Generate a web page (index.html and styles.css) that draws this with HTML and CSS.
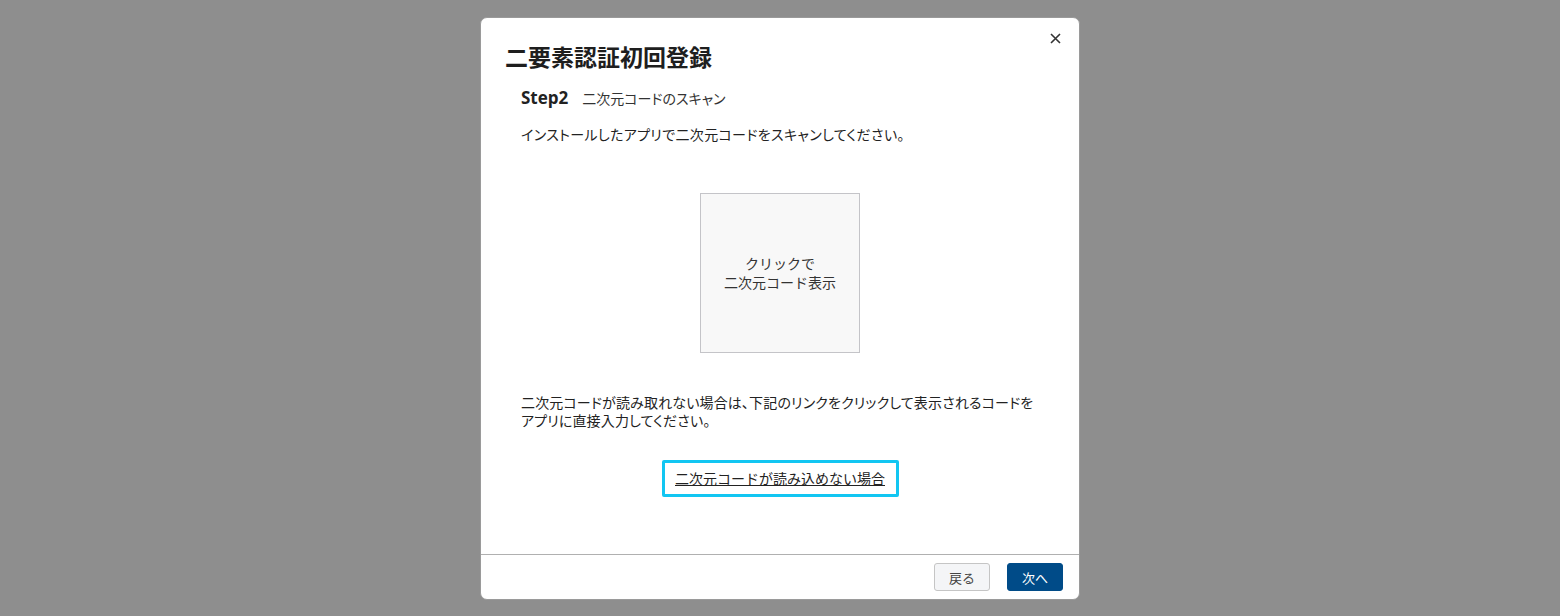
FILE: index.html
```html
<!DOCTYPE html>
<html lang="ja">
<head>
    <meta charset="utf-8">
    <title>二要素認証初回登録</title>
    <link rel="stylesheet" href="styles.css">
</head>
<body>
    <div class="overlay">
        <div class="modal">
            <button class="close" aria-label="閉じる">
                <svg width="11" height="11" viewBox="0 0 11 11">
                    <path d="M1 1 L10 10 M10 1 L1 10" stroke="#333" stroke-width="1.6" fill="none"/>
                </svg>
            </button>
            <div class="modal-head">
                <h1>二要素認証初回登録</h1>
            </div>
            <div class="modal-body">
                <div class="step">
                    <span class="step-no">Step2</span>
                    <span class="step-name">二次元コードのスキャン</span>
                </div>
                <p class="lead">インストールしたアプリで二次元コードをスキャンしてください。</p>
                <div class="qr-wrap">
                    <div class="qr">クリックで<br>二次元コード表示</div>
                </div>
                <p class="note">二次元コードが読み取れない場合は、下記のリンクをクリックして表示されるコードを<br>アプリに直接入力してください。</p>
                <div class="link-wrap">
                    <a class="manual" href="#">二次元コードが読み込めない場合</a>
                </div>
            </div>
            <div class="modal-foot">
                <button class="btn btn-back">戻る</button>
                <button class="btn btn-next">次へ</button>
            </div>
        </div>
    </div>
</body>
</html>
```

FILE: styles.css
```css
html, body {
    margin: 0;
    height: 100%;
}

body {
    background-color: #8e8e8e;
    font-family: "Noto Sans CJK JP", "Noto Sans", sans-serif;
    font-size: 14px;
    color: #222;
}

.overlay {
    display: flex;
    justify-content: center;
    padding-top: 17px;
}

.modal {
    position: relative;
    width: 600px;
    height: 583px;
    box-sizing: border-box;
    background-color: #fff;
    border: 1px solid #9a9a9a;
    border-radius: 7px;
    display: flex;
    flex-direction: column;
}

.close {
    position: absolute;
    top: 10px;
    right: 14px;
    width: 20px;
    height: 20px;
    padding: 0;
    border: none;
    background: none;
    display: flex;
    align-items: center;
    justify-content: center;
}

.modal-head {
    padding: 22px 24px 0;
}

h1 {
    margin: 0;
    font-size: 23px;
    line-height: 32px;
    font-weight: bold;
    color: #1e1e1e;
}

.modal-body {
    padding: 0 40px;
}

.step {
    margin-top: 14px;
    line-height: 24px;
    display: flex;
    align-items: baseline;
    gap: 14px;
}

.step-no {
    font-family: "Open Sans", "Noto Sans", sans-serif;
    font-size: 17px;
    font-weight: bold;
}

.step-name {
    font-size: 14px;
    color: #333;
    font-feature-settings: "palt";
}

.lead {
    margin: 12px 0 0;
    line-height: 24px;
    font-feature-settings: "palt";
    letter-spacing: 0.35px;
}

.qr-wrap {
    margin-top: 47px;
    display: flex;
    justify-content: center;
}

.qr {
    width: 160px;
    height: 160px;
    box-sizing: border-box;
    background-color: #f8f8f8;
    border: 1px solid #c4c4c8;
    display: flex;
    align-items: center;
    justify-content: center;
    text-align: center;
    line-height: 19px;
    color: #333;
}

.note {
    margin: 40px 0 0;
    line-height: 18px;
    font-feature-settings: "palt";
    letter-spacing: 0.15px;
}

.link-wrap {
    margin-top: 31px;
    display: flex;
    justify-content: center;
}

.manual {
    display: block;
    width: 237px;
    height: 37px;
    box-sizing: border-box;
    border: 3px solid #12c6f2;
    border-radius: 2px;
    text-align: center;
    line-height: 31px;
    color: #222;
    text-decoration: underline;
}

.modal-foot {
    margin-top: auto;
    height: 44px;
    border-top: 1px solid #b0b0b0;
    display: flex;
    align-items: center;
    justify-content: flex-end;
    gap: 17px;
    padding-right: 16px;
}

.btn {
    width: 56px;
    height: 28px;
    border-radius: 3px;
    font-family: "Noto Sans CJK JP", sans-serif;
    font-size: 13px;
    padding: 0;
}

.btn-back {
    background-color: #f4f5f7;
    border: 1px solid #c5c5c5;
    color: #444;
}

.btn-next {
    background-color: #004b88;
    border: 1px solid #004b88;
    color: #fff;
}
```
